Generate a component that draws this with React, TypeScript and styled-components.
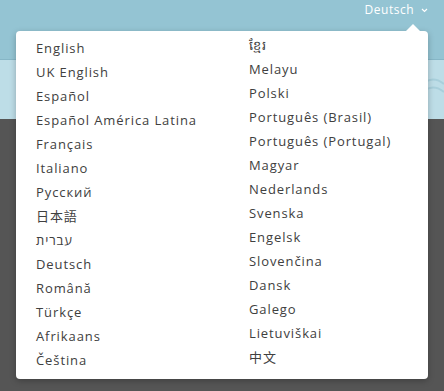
import React from 'react';
import styled, { createGlobalStyle } from 'styled-components';

const GlobalStyle = createGlobalStyle`
  html, body {
    margin: 0;
    padding: 0;
    background: #555555;
  }
  body {
    font-family: "Open Sans", "Noto Sans", "Noto Sans CJK SC", sans-serif;
  }
`;

const Page = styled.div`
  position: relative;
  width: 444px;
  height: 391px;
  overflow: hidden;
  background: #555555;
`;

const Header = styled.header`
  height: 60px;
  background: #94c4d3;
  border-bottom: 1px solid #86b6c6;
  display: flex;
  justify-content: flex-end;
  align-items: flex-start;
  padding-right: 16px;
  box-sizing: border-box;
`;

const LangButton = styled.button`
  background: none;
  border: none;
  padding: 2px 0 0;
  display: flex;
  align-items: center;
  gap: 7px;
  color: #ffffff;
  font-family: inherit;
  font-size: 12px;
  letter-spacing: 0.5px;
  line-height: 16px;
  cursor: pointer;
`;

const Banner = styled.div`
  position: relative;
  height: 59px;
  background: #bddde7;
  overflow: hidden;
`;

const Waves = styled.svg`
  position: absolute;
  right: -6px;
  top: 12px;
`;

const Dropdown = styled.div`
  position: absolute;
  left: 16px;
  top: 31px;
  width: 412px;
  box-sizing: border-box;
  background: #ffffff;
  border-radius: 4px;
  box-shadow: 0 2px 6px rgba(0, 0, 0, 0.25);
  padding: 5px 20px 7px;
  display: grid;
  grid-template-columns: 213px 1fr;

  &::before {
    content: '';
    position: absolute;
    top: -7px;
    right: 8px;
    border-left: 7px solid transparent;
    border-right: 7px solid transparent;
    border-bottom: 7px solid #ffffff;
  }
`;

const Column = styled.ul<{ $shift?: number }>`
  list-style: none;
  margin: ${({ $shift }) => ($shift ? `${$shift}px` : '0')} 0 0;
  padding: 0;
`;

const Item = styled.li`
  height: 24px;
  line-height: 24px;
  font-size: 13px;
  letter-spacing: 0.9px;
  color: #404040;
  white-space: nowrap;
  cursor: pointer;
`;

const left = [
  'English',
  'UK English',
  'Español',
  'Español América Latina',
  'Français',
  'Italiano',
  'Русский',
  '日本語',
  'עברית',
  'Deutsch',
  'Română',
  'Türkçe',
  'Afrikaans',
  'Čeština',
];

const right = [
  'ខ្មែរ',
  'Melayu',
  'Polski',
  'Português (Brasil)',
  'Português (Portugal)',
  'Magyar',
  'Nederlands',
  'Svenska',
  'Engelsk',
  'Slovenčina',
  'Dansk',
  'Galego',
  'Lietuviškai',
  '中文',
];

const App: React.FC = () => {
  return (
    <Page>
      <GlobalStyle />
      <Header>
        <LangButton>
          Deutsch
          <svg width="7" height="5" viewBox="0 0 7 5">
            <path d="M1 1l2.5 2.5L6 1" stroke="#fff" strokeWidth="1.2" fill="none" />
          </svg>
        </LangButton>
      </Header>
      <Banner>
        <Waves width="30" height="30" viewBox="0 0 30 30">
          <path d="M0 14 Q12 2 24 12" stroke="#a8cfdb" strokeWidth="2" fill="none" />
          <path d="M0 22 Q12 10 24 20" stroke="#a8cfdb" strokeWidth="2" fill="none" />
        </Waves>
      </Banner>
      <Dropdown>
        <Column>
          {left.map((l) => (
            <Item key={l}>{l}</Item>
          ))}
        </Column>
        <Column $shift={-3}>
          {right.map((l) => (
            <Item key={l}>{l}</Item>
          ))}
        </Column>
      </Dropdown>
    </Page>
  );
};

export default App;
